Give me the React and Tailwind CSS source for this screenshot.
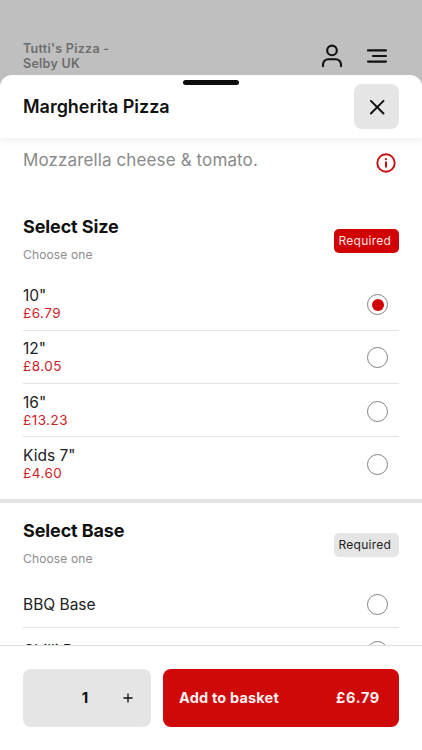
import React, { useState } from 'react';
import clsx from 'clsx';

const sizes = [
  { id: '10', label: '10"', price: 6.79 },
  { id: '12', label: '12"', price: 8.05 },
  { id: '16', label: '16"', price: 13.23 },
  { id: 'kids', label: 'Kids 7"', price: 4.6 },
];

const bases = [
  { id: 'bbq', label: 'BBQ Base' },
  { id: 'chilli', label: 'Chilli Base' },
];

const formatPrice = (price) => `£${price.toFixed(2)}`;

const UserIcon = () => (
  <svg width="24" height="26" viewBox="0 0 24 26" fill="none" stroke="#111" strokeWidth="2.1" strokeLinecap="round">
    <circle cx="12" cy="7.4" r="4.8" />
    <path d="M3 23.2v-1.7a5.3 5.3 0 0 1 5.3-5.3h7.4a5.3 5.3 0 0 1 5.3 5.3v1.7" />
  </svg>
);

const MenuIcon = () => (
  <svg width="22" height="16" viewBox="0 0 22 16" fill="none" stroke="#111" strokeWidth="2.1" strokeLinecap="round">
    <path d="M2 2.4h18M7 8h13M2 13.6h18" />
  </svg>
);

const CloseIcon = () => (
  <svg width="18" height="18" viewBox="0 0 18 18" fill="none" stroke="#111" strokeWidth="2" strokeLinecap="round">
    <path d="M2.9 2.9l12.6 12.6M15.5 2.9L2.9 15.5" />
  </svg>
);

const InfoIcon = () => (
  <svg width="20" height="20" viewBox="0 0 20 20" fill="none" stroke="#c90d0d">
    <circle cx="10" cy="10" r="8.7" strokeWidth="1.9" />
    <path d="M10 8.4v6" strokeWidth="2" />
    <circle cx="10" cy="6.1" r="1.1" fill="#c90d0d" stroke="none" />
  </svg>
);

const SectionHeader = ({ title, highlight }) => (
  <div className="flex justify-between items-center">
    <div>
      <h2 className="text-[18px] leading-6 font-bold tracking-[-0.12px] text-[#111]">{title}</h2>
      <p className="mt-[7px] text-[12px] leading-[18px] tracking-[0.14px] text-[#8c8c8c]">Choose one</p>
    </div>
    <span
      className={clsx(
        'mt-[3px] w-[65px] h-6 pl-[4.5px] rounded-[5px] text-[12px] leading-6 tracking-[0.25px]',
        highlight ? 'bg-[#d00202] text-[#ffe1e1]' : 'bg-[#e5e5e5] text-[#222]'
      )}
    >
      Required
    </span>
  </div>
);

const OptionRow = ({ option, checked, onSelect, last }) => (
  <button
    type="button"
    role="radio"
    aria-checked={checked}
    onClick={onSelect}
    className={clsx(
      'w-full shrink-0 flex justify-between items-center pr-[11px] text-left',
      option.price ? 'h-[53.33px] pt-[2px]' : 'h-[46.5px] pt-[2px]',
      last ? 'pb-px' : 'border-b border-[#e3e3e3]'
    )}
  >
    <span>
      <span className="block text-[15.5px] leading-[18px] text-[#222]">{option.label}</span>
      {option.price && (
        <span className="block text-[13.5px] leading-[17px] tracking-[0.45px] text-[#cf2028]">
          {formatPrice(option.price)}
        </span>
      )}
    </span>
    <span className="w-[21px] h-[21px] flex items-center justify-center rounded-full border border-[#808080]">
      {checked && <span className="w-[12px] h-[12px] rounded-full bg-[#d00202]"></span>}
    </span>
  </button>
);

const App = () => {
  const [size, setSize] = useState('10');
  const [base, setBase] = useState(null);
  const [quantity, setQuantity] = useState(1);

  const selected = sizes.find((s) => s.id === size);

  return (
    <div className="h-[750px] w-[422px] overflow-hidden flex flex-col bg-[#bfbfbf] font-['Inter','Liberation_Sans',sans-serif]">
      <header className="h-[75px] shrink-0 flex justify-between items-start pl-[23px] pr-[34px]">
        <p className="mt-[41px] w-[110px] text-[12.5px] leading-[15px] font-semibold tracking-[0.27px] text-[#6d6d6d]">
          Tutti's Pizza - Selby UK
        </p>
        <div className="mt-[43px] flex items-center gap-[22px]">
          <UserIcon />
          <MenuIcon />
        </div>
      </header>

      <main className="flex-1 min-h-0 flex flex-col rounded-t-xl bg-white overflow-hidden">
        <div className="h-[63px] shrink-0 pt-[5px] px-[23px] shadow-[0_2px_9px_rgba(0,0,0,0.08)]">
          <div className="w-14 h-[5px] mx-auto rounded-full bg-[#0d0d0f]"></div>
          <div className="-mt-px flex justify-between items-center">
            <h1 className="text-[18px] leading-6 font-semibold tracking-[-0.02px] text-[#111]">Margherita Pizza</h1>
            <button
              type="button"
              aria-label="Close"
              className="w-[45px] h-[45px] flex items-center justify-center rounded-lg bg-[#e5e5e5]"
            >
              <CloseIcon />
            </button>
          </div>
        </div>

        <div className="flex-1 min-h-0 flex flex-col overflow-hidden">
          <div className="shrink-0 flex justify-between items-start pt-[10px] pl-[23px] pr-[26px]">
            <p className="text-[17px] leading-6 tracking-[0.12px] text-[#8a8a8a]">Mozzarella cheese &amp; tomato.</p>
            <button type="button" aria-label="Information" className="mt-[5px]">
              <InfoIcon />
            </button>
          </div>

          <section className="h-[326px] shrink-0 pt-[42px] px-[23px]">
            <SectionHeader title="Select Size" highlight />
            <div role="radiogroup" className="mt-[13.5px]">
              {sizes.map((option, i) => (
                <OptionRow
                  key={option.id}
                  option={option}
                  checked={size === option.id}
                  onSelect={() => setSize(option.id)}
                  last={i === sizes.length - 1}
                />
              ))}
            </div>
          </section>

          <section className="shrink-0 border-t-4 border-[#e3e3e3] pt-4 px-[23px]">
            <SectionHeader title="Select Base" />
            <div role="radiogroup" className="mt-[13px]">
              {bases.map((option) => (
                <OptionRow
                  key={option.id}
                  option={option}
                  checked={base === option.id}
                  onSelect={() => setBase(option.id)}
                />
              ))}
            </div>
          </section>
        </div>

        <footer className="h-[105px] shrink-0 flex gap-3 pt-[23px] px-[23px] border-t border-[#dedede] bg-white">
          <div className="w-[128px] h-[58px] grid grid-cols-3 items-center rounded-lg bg-[#e5e5e5] text-center text-[#111]">
            <span></span>
            <span className="text-[15px] font-bold pr-[4px]">{quantity}</span>
            <button type="button" aria-label="Add one" className="flex justify-center pr-1" onClick={() => setQuantity(quantity + 1)}>
              <svg width="10" height="10" viewBox="0 0 10 10" stroke="#111" strokeWidth="1.3">
                <path d="M5 .5v9M.5 5h9" />
              </svg>
            </button>
          </div>
          <button
            type="button"
            className="flex-1 h-[58px] flex justify-between items-center pl-4 pr-[19px] rounded-lg bg-[#cf0808] text-[14.5px] font-bold text-[#fff0f0]"
          >
            <span className="tracking-[0.18px]">Add to basket</span>
            <span className="tracking-[0.7px]">{formatPrice(selected.price * quantity)}</span>
          </button>
        </footer>
      </main>
    </div>
  );
};

export default App;
